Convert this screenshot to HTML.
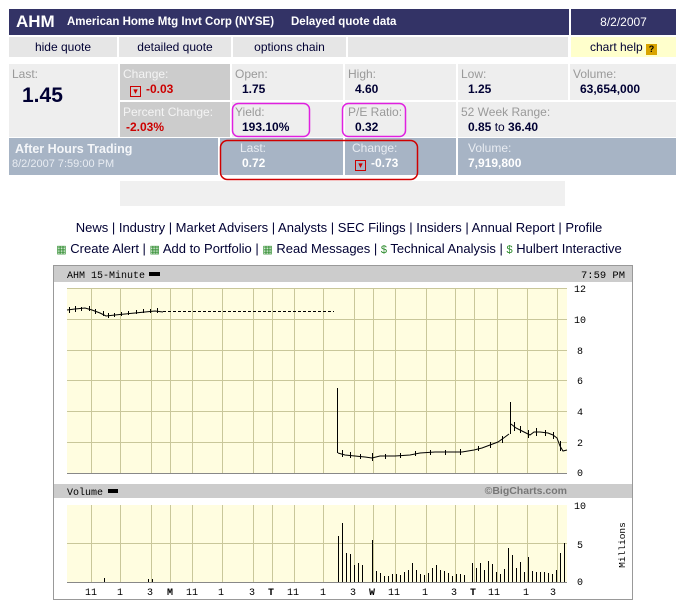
<!DOCTYPE html>
<html><head><meta charset="utf-8"><style>
*{margin:0;padding:0;box-sizing:border-box}
body{width:678px;height:609px;background:#fff;position:relative;font-family:"Liberation Sans",Arial,sans-serif;overflow:hidden}
.a{position:absolute}
.c{position:absolute;background:#eeeeee}
.d{background:#cccccc}
.lb{font-size:12px;color:#999;position:absolute;left:3px;top:3px;white-space:nowrap}
.d .lb{color:#f4f4f4}
.v{font-size:12px;font-weight:bold;color:#000033;position:absolute;left:10px;top:18px;white-space:nowrap}
.r{color:#cc0000}
.nav{position:absolute;background:#e6e6e6;font-size:12px;color:#000033;text-align:center;line-height:20px;top:37px;height:20px}
.ah{position:absolute;background:#a7b4c5;top:138px;height:37px}
.ah .lb{color:#e8ecf2}
.ah .v{color:#fff}
.dn{display:inline-block;width:11px;height:11px;border:1px solid #cc0000;font-size:9px;line-height:9px;text-align:center;color:#cc0000;vertical-align:-1px;margin-right:5px;font-weight:normal}
.links{position:absolute;left:0;width:678px;text-align:center;font-size:13px;color:#000033;white-space:nowrap}
.g{color:#2a8a2a;font-size:11px}
</style></head><body>
<div class="a" style="left:9px;top:9px;width:560px;height:26px;background:#333366;color:#fff;font-weight:bold;white-space:nowrap">
<span class="a" style="left:7px;top:3px;font-size:17px">AHM</span>
<span class="a" style="left:58px;top:7px;font-size:11.5px">American Home Mtg Invt Corp (NYSE)</span>
<span class="a" style="left:282px;top:7px;font-size:11.5px">Delayed quote data</span>
</div>
<div class="a" style="left:571px;top:9px;width:105px;height:26px;background:#333366;color:#fff;font-size:12px;text-align:center;line-height:26px">8/2/2007</div>
<div class="nav" style="left:9px;width:108px">hide quote</div>
<div class="nav" style="left:119px;width:112px">detailed quote</div>
<div class="nav" style="left:233px;width:113px">options chain</div>
<div class="nav" style="left:348px;width:220px"></div>
<div class="nav" style="left:571px;width:105px;background:#ffffcc">chart help <span style="display:inline-block;width:11px;height:11px;background:#d9a400;color:#000;font-size:9px;line-height:11px;font-weight:bold;vertical-align:-1px">?</span></div>

<div class="c" style="left:9px;top:64px;width:109px;height:73px"><span class="lb">Last:</span><span class="a" style="left:13px;top:20px;font-size:21px;font-weight:bold;color:#000033">1.45</span></div>
<div class="c d" style="left:120px;top:64px;width:110px;height:36px"><span class="lb">Change:</span><span class="v r"><span class="dn">▾</span>-0.03</span></div>
<div class="c" style="left:232px;top:64px;width:111px;height:36px"><span class="lb">Open:</span><span class="v">1.75</span></div>
<div class="c" style="left:345px;top:64px;width:111px;height:36px"><span class="lb">High:</span><span class="v">4.60</span></div>
<div class="c" style="left:458px;top:64px;width:110px;height:36px"><span class="lb">Low:</span><span class="v">1.25</span></div>
<div class="c" style="left:570px;top:64px;width:106px;height:36px"><span class="lb">Volume:</span><span class="v">63,654,000</span></div>
<div class="c d" style="left:120px;top:102px;width:110px;height:35px"><span class="lb">Percent Change:</span><span class="v r" style="left:6px">-2.03%</span></div>
<div class="c" style="left:232px;top:102px;width:111px;height:35px"><span class="lb">Yield:</span><span class="v">193.10%</span></div>
<div class="c" style="left:345px;top:102px;width:111px;height:35px"><span class="lb">P/E Ratio:</span><span class="v">0.32</span></div>
<div class="c" style="left:458px;top:102px;width:218px;height:35px"><span class="lb">52 Week Range:</span><span class="v">0.85 <span style="font-weight:normal">to</span> 36.40</span></div>

<div class="ah" style="left:9px;width:209px"><span class="lb" style="font-weight:bold;font-size:12.5px;top:4px;left:6px;color:#f4f6f9">After Hours Trading</span><span class="lb" style="top:20px;font-size:11px">8/2/2007 7:59:00 PM</span></div>
<div class="ah" style="left:220px;width:123px"><span class="lb" style="left:20px">Last:</span><span class="v" style="left:22px">0.72</span></div>
<div class="ah" style="left:345px;width:111px"><span class="lb" style="left:7px">Change:</span><span class="v r" style="left:10px"><span class="dn">▾</span>-0.73</span></div>
<div class="ah" style="left:458px;width:218px"><span class="lb" style="left:10px">Volume:</span><span class="v">7,919,800</span></div>
<div class="a" style="left:120px;top:181px;width:445px;height:25px;background:#f0f0f0"></div>

<div class="links" style="top:220px">News | Industry | Market Advisers | Analysts | SEC Filings | Insiders | Annual Report | Profile</div>
<div class="links" style="top:241px"><span class="g">▦</span> Create Alert | <span class="g">▦</span> Add to Portfolio | <span class="g">▦</span> Read Messages | <span class="g">$</span> Technical Analysis | <span class="g">$</span> Hulbert Interactive</div>

<svg class="a" style="left:0;top:0" width="678" height="609" viewBox="0 0 678 609" font-family="Liberation Mono, monospace">
<rect x="220.5" y="140.5" width="197" height="39" rx="7" fill="none" stroke="#d00000" stroke-width="1.5"/>
<rect x="232.5" y="103.5" width="77" height="33" rx="6" fill="none" stroke="#e020e0" stroke-width="1.5"/>
<rect x="342.5" y="103.5" width="63" height="33" rx="6" fill="none" stroke="#e020e0" stroke-width="1.5"/>
<rect x="53.5" y="265.5" width="579" height="334" fill="#fff" stroke="#999"/>
<rect x="54" y="266" width="578" height="16" fill="#cccccc"/>
<rect x="54" y="484" width="578" height="14" fill="#cccccc"/>
<text x="67" y="278" font-size="10" fill="#000" textLength="78" lengthAdjust="spacingAndGlyphs">AHM 15-Minute</text>
<rect x="149" y="272" width="11" height="4" fill="#000"/>
<text x="581" y="278" font-size="10" fill="#000" textLength="44" lengthAdjust="spacingAndGlyphs">7:59 PM</text>
<text x="67" y="495" font-size="10" fill="#000" textLength="36" lengthAdjust="spacingAndGlyphs">Volume</text>
<rect x="108" y="489" width="10" height="4" fill="#000"/>
<text x="567" y="494" font-size="10.5" font-weight="bold" fill="#777" text-anchor="end" font-family="Liberation Sans">©BigCharts.com</text>
<rect x="67" y="288" width="500" height="185" fill="#fffde0"/>
<rect x="67" y="505" width="500" height="77" fill="#fffde0"/>
<g stroke="#c9c79a" stroke-width="1">
<path d="M67 288.5H567M67 319.5H567M67 350.5H567M67 380.5H567M67 411.5H567M67 442.5H567M67 543.5H567"/>
<path d="M91.5 288V473M120.5 288V473M151.5 288V473M170.5 288V473M192.5 288V473M222.5 288V473M253.5 288V473M272.5 288V473M294.5 288V473M323.5 288V473M354.5 288V473M373.5 288V473M395.5 288V473M426.5 288V473M455.5 288V473M474.5 288V473M497.5 288V473M527.5 288V473M557.5 288V473"/>
<path d="M91.5 505V582M120.5 505V582M151.5 505V582M170.5 505V582M192.5 505V582M222.5 505V582M253.5 505V582M272.5 505V582M294.5 505V582M323.5 505V582M354.5 505V582M373.5 505V582M395.5 505V582M426.5 505V582M455.5 505V582M474.5 505V582M497.5 505V582M527.5 505V582M557.5 505V582"/>
</g>
<path d="M67 473.5H567M67 582.5H567" stroke="#888"/>
<g font-size="10" fill="#000">
<text x="574" y="292">12</text><text x="574" y="323">10</text><text x="577" y="354">8</text><text x="577" y="384">6</text><text x="577" y="415">4</text><text x="577" y="446">2</text><text x="577" y="476">0</text>
<text x="574" y="509">10</text><text x="577" y="548">5</text><text x="577" y="585">0</text>
<text x="625" y="545" transform="rotate(-90 625 545)" text-anchor="middle" font-size="9.5">Millions</text>
</g>
<g font-size="10" fill="#000" text-anchor="middle">
<text x="91" y="595">11</text><text x="120" y="595">1</text><text x="150" y="595">3</text><text x="170" y="595" font-weight="bold">M</text><text x="192" y="595">11</text><text x="221" y="595">1</text><text x="252" y="595">3</text><text x="271" y="595" font-weight="bold">T</text><text x="293" y="595">11</text><text x="323" y="595">1</text><text x="353" y="595">3</text><text x="372" y="595" font-weight="bold">W</text><text x="394" y="595">11</text><text x="425" y="595">1</text><text x="454" y="595">3</text><text x="473" y="595" font-weight="bold">T</text><text x="494" y="595">11</text><text x="526" y="595">1</text><text x="553" y="595">3</text>
</g>
<g stroke="#000" fill="none" stroke-width="1">
<polyline points="67,310 75,309 85,308 92,310 100,313 106,316 115,315 125,314 135,313 145,312 155,311 163,312"/>
<path d="M69.5 307V313M75.5 306V312M81.5 307V311M89.5 306V311M95.5 309V314M103.5 311V316M108.5 313V318M114.5 313V317M121.5 312V316M128.5 311V315M136.5 310V314M143.5 309V313M150.5 309V313M157.5 308V313"/>
<path d="M163 311.5H334" stroke-dasharray="3,2"/>
<path d="M337.5 388V453"/>
<polyline points="338,453 345,455 355,456 365,457 372,458 380,456 395,456 410,455 420,453 435,452 450,452 462,452 474,450 482,448 490,445 498,442 505,437 509,434"/>
<path d="M342.5 450V457M350.5 452V458M360.5 454V459M372.5 453V461M385.5 454V459M400.5 453V458M415.5 451V456M430.5 450V455M445.5 450V455M460.5 449V455M478.5 446V451M490.5 442V448M502.5 436V443"/>
<path d="M510.5 402V434"/>
<polyline points="511,424 516,428 522,431 530,435 534,432 540,432 548,433 553,435 557,438 560,446 563,451 567,450"/>
<path d="M514.5 422V431M520.5 426V433M528.5 430V438M536.5 428V436M545.5 430V436M553.5 432V439M560.5 441V451"/>
</g>
<g stroke="#000" stroke-width="1">
<path d="M338.5 582V536M342.5 582V523M346.5 582V553M350.5 582V554M354.5 582V565M358.5 582V563M362.5 582V565M372.5 582V540M376.5 582V571M380.5 582V573M384.5 582V576M388.5 582V576M392.5 582V574M396.5 582V574M400.5 582V575M404.5 582V572M408.5 582V570M412.5 582V563M416.5 582V570M420.5 582V574M424.5 582V575M428.5 582V573M432.5 582V568M436.5 582V565M440.5 582V570M444.5 582V571M448.5 582V573M452.5 582V576M456.5 582V574M460.5 582V574M464.5 582V575M472.5 582V563M476.5 582V568M480.5 582V563M484.5 582V570M488.5 582V561M492.5 582V564M496.5 582V572M500.5 582V574M504.5 582V569M508.5 582V548M512.5 582V555M516.5 582V568M520.5 582V562M524.5 582V572M528.5 582V557M532.5 582V571M536.5 582V572M540.5 582V572M544.5 582V572M548.5 582V573M552.5 582V574M556.5 582V570M560.5 582V553M564.5 582V543"/>
<path d="M104.5 582V578M148.5 582V579M152.5 582V579"/>
</g>
</svg>
</body></html>
